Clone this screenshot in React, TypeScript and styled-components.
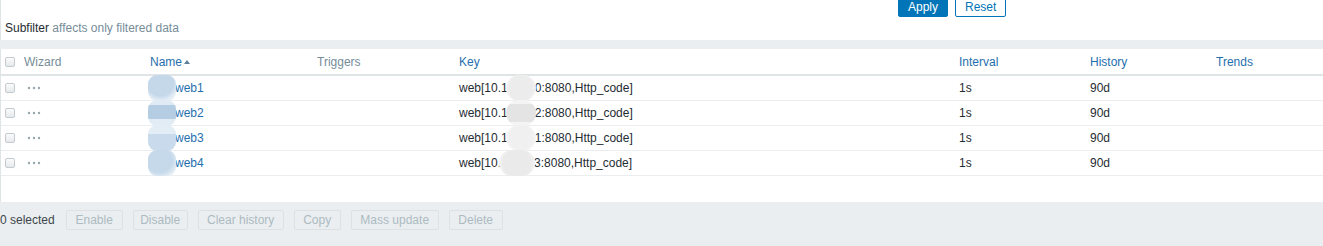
import React from "react";
import styled, { createGlobalStyle, css } from "styled-components";

const GlobalStyle = createGlobalStyle`
  html, body { margin: 0; padding: 0; }
  body {
    background: #ebeef0;
    font-family: "Liberation Sans", Arial, sans-serif;
    font-size: 12px;
    color: #1f2c33;
    overflow: hidden;
  }
  * { box-sizing: border-box; }
`;

const Page = styled.div`
  display: flex;
  flex-direction: column;
  width: 1323px;
`;

const FilterPanel = styled.div`
  height: 40px;
  background: #ffffff;
  border-left: 1px solid #dfe4e7;
  display: flex;
  flex-direction: column;
`;

const FilterButtons = styled.div`
  display: flex;
  gap: 7px;
  margin-top: -3px;
  padding-left: 897px;
`;

const BaseButton = styled.button`
  height: 20px;
  padding: 0 9px;
  font-family: inherit;
  font-size: 12px;
  line-height: 18px;
  border-radius: 2px;
  border: 1px solid #0275b8;
  cursor: pointer;
`;

const PrimaryButton = styled(BaseButton)`
  background: #0275b8;
  color: #ffffff;
`;

const OutlineButton = styled(BaseButton)`
  background: #ffffff;
  color: #0275b8;
`;

const SubfilterNote = styled.div`
  margin-top: 4px;
  padding-left: 4px;
  line-height: 14px;
  color: #1f2c33;
`;

const Muted = styled.span`
  color: #768d99;
`;

const TablePanel = styled.div`
  margin-top: 9px;
  background: #ffffff;
  border-left: 1px solid #dfe4e7;
  padding-bottom: 26px;
`;

const Row = styled.div<{ $head?: boolean }>`
  display: grid;
  grid-template-columns: 23px 126px 167px 142px 500px 131px 126px 1fr;
  align-items: center;
  height: ${(p) => (p.$head ? "27px" : "25px")};
  border-bottom: ${(p) => (p.$head ? "2px solid #dfe4e7" : "1px solid #ebeef0")};
`;

const Cell = styled.div`
  display: flex;
  align-items: center;
  white-space: nowrap;
  line-height: 14px;
`;

const HeadLabel = styled.span<{ $link?: boolean }>`
  color: ${(p) => (p.$link ? "#1f6fae" : "#768d99")};
  display: inline-flex;
  align-items: center;
`;

const SortArrow = styled.span`
  display: inline-block;
  margin-left: 2px;
  margin-top: 1px;
  width: 0;
  height: 0;
  border-left: 3px solid transparent;
  border-right: 3px solid transparent;
  border-bottom: 4px solid #5c7e97;
`;

const Checkbox = styled.span`
  display: inline-block;
  width: 10px;
  height: 10px;
  margin-left: 4px;
  border: 1px solid #c3cbd0;
  border-radius: 2px;
  background: linear-gradient(#fbfbfb, #e6e9eb);
`;

const Dots = styled.svg`
  margin-left: 3px;
  display: block;
`;

const NameLink = styled.a`
  color: #1f6fae;
  text-decoration: none;
`;

const tones = {
  blue1: "radial-gradient(circle at 45% 30%, #c4d8ea 0 55%, #e4edf5 75%)",
  blue2: "linear-gradient(#dfeaf4 0 20%, #b4cde3 20% 75%, #e2ecf5 75%)",
  blue3: "linear-gradient(#e3edf6 0 35%, #c8daeb 35%)",
  blue4: "radial-gradient(ellipse at 40% 40%, #c6d9ea 0 55%, #e6eef6 80%)",
  gray1: "radial-gradient(circle at 50% 50%, #ececec 0 60%, #f7f7f7 80%)",
  gray2: "linear-gradient(#f4f4f4 0 15%, #e4e4e4 15% 85%, #f4f4f4 85%)",
  gray3: "radial-gradient(circle at 50% 50%, #f0f0f0 0 60%, #f8f8f8 80%)",
  gray4: "radial-gradient(circle at 50% 50%, #eaeaea 0 60%, #f5f5f5 85%)",
};

type Tone = keyof typeof tones;

const Redacted = styled.span<{ $w: number; $tone: Tone; $radius: number }>`
  position: relative;
  display: inline-block;
  width: ${(p) => p.$w}px;
  height: 14px;
  &::before {
    content: "";
    position: absolute;
    left: -2px;
    right: -1px;
    top: -6px;
    bottom: -6px;
    background: ${(p) => tones[p.$tone]};
    ${(p) => css`
      border-radius: ${p.$radius}px;
    `}
  }
`;

const ActionBar = styled.div`
  display: flex;
  align-items: flex-start;
  gap: 10px;
  padding-top: 8px;
  height: 44px;
`;

const SelectedCount = styled.span`
  line-height: 20px;
  margin-right: 1px;
  color: #3b464c;
`;

const DisabledButton = styled.button<{ $w: number }>`
  width: ${(p) => p.$w}px;
  height: 20px;
  padding: 0;
  font-family: inherit;
  font-size: 12px;
  line-height: 18px;
  text-align: center;
  border: 1px solid #dce1e4;
  border-radius: 2px;
  background: #ebeef0;
  color: #acbbc2;
`;

type ItemRow = {
  name: string;
  nameTone: Tone;
  keyPrefix: string;
  keySuffix: string;
  keyBlob: number;
  keyTone: Tone;
};

const rows: ItemRow[] = [
  { name: "web1", nameTone: "blue1", keyPrefix: "web[10.1", keySuffix: "0:8080,Http_code]", keyBlob: 27, keyTone: "gray1" },
  { name: "web2", nameTone: "blue2", keyPrefix: "web[10.1", keySuffix: "2:8080,Http_code]", keyBlob: 27, keyTone: "gray2" },
  { name: "web3", nameTone: "blue3", keyPrefix: "web[10.1", keySuffix: "1:8080,Http_code]", keyBlob: 27, keyTone: "gray3" },
  { name: "web4", nameTone: "blue4", keyPrefix: "web[10.", keySuffix: "3:8080,Http_code]", keyBlob: 33, keyTone: "gray4" },
];

const actions: { label: string; w: number }[] = [
  { label: "Enable", w: 57 },
  { label: "Disable", w: 55 },
  { label: "Clear history", w: 86 },
  { label: "Copy", w: 47 },
  { label: "Mass update", w: 88 },
  { label: "Delete", w: 54 },
];

const WizardDots = () => (
  <Dots width="14" height="4" viewBox="0 0 14 4">
    <circle cx="2" cy="2" r="1.2" fill="#97a5ad" />
    <circle cx="7" cy="2" r="1.2" fill="#97a5ad" />
    <circle cx="12" cy="2" r="1.2" fill="#97a5ad" />
  </Dots>
);

export default function App() {
  return (
    <>
      <GlobalStyle />
      <Page>
        <FilterPanel>
          <FilterButtons>
            <PrimaryButton>Apply</PrimaryButton>
            <OutlineButton>Reset</OutlineButton>
          </FilterButtons>
          <SubfilterNote>
            Subfilter <Muted>affects only filtered data</Muted>
          </SubfilterNote>
        </FilterPanel>

        <TablePanel>
          <Row $head>
            <Cell>
              <Checkbox />
            </Cell>
            <Cell>
              <HeadLabel>Wizard</HeadLabel>
            </Cell>
            <Cell>
              <HeadLabel $link>
                Name
                <SortArrow />
              </HeadLabel>
            </Cell>
            <Cell>
              <HeadLabel>Triggers</HeadLabel>
            </Cell>
            <Cell>
              <HeadLabel $link>Key</HeadLabel>
            </Cell>
            <Cell>
              <HeadLabel $link>Interval</HeadLabel>
            </Cell>
            <Cell>
              <HeadLabel $link>History</HeadLabel>
            </Cell>
            <Cell>
              <HeadLabel $link>Trends</HeadLabel>
            </Cell>
          </Row>
          {rows.map((r) => (
            <Row key={r.name}>
              <Cell>
                <Checkbox />
              </Cell>
              <Cell>
                <WizardDots />
              </Cell>
              <Cell>
                <Redacted $w={25} $tone={r.nameTone} $radius={9} />
                <NameLink href="#">{r.name}</NameLink>
              </Cell>
              <Cell />
              <Cell>
                {r.keyPrefix}
                <Redacted $w={r.keyBlob} $tone={r.keyTone} $radius={13} />
                {r.keySuffix}
              </Cell>
              <Cell>1s</Cell>
              <Cell>90d</Cell>
              <Cell />
            </Row>
          ))}
        </TablePanel>

        <ActionBar>
          <SelectedCount>0 selected</SelectedCount>
          {actions.map((a) => (
            <DisabledButton key={a.label} $w={a.w} disabled>
              {a.label}
            </DisabledButton>
          ))}
        </ActionBar>
      </Page>
    </>
  );
}
